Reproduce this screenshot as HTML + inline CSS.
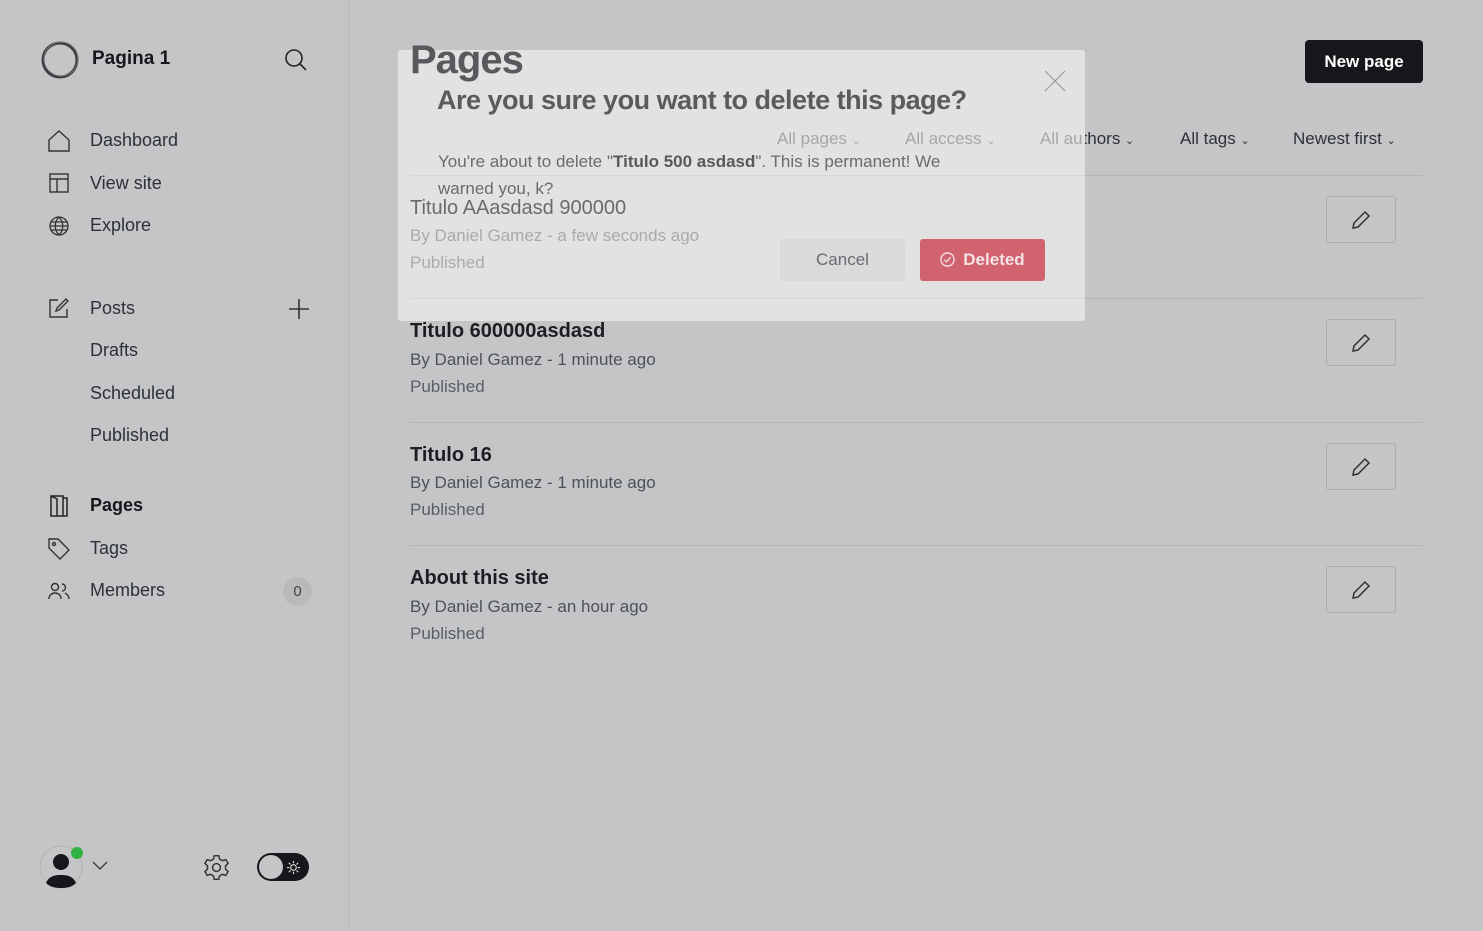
<!DOCTYPE html>
<html><head><meta charset="utf-8"><style>
*{box-sizing:border-box;margin:0;padding:0}
body{width:1483px;height:931px;overflow:hidden;background:#c4c5c7;font-family:"Liberation Sans",sans-serif;color:#2a2c30;position:relative}
.a{position:absolute;white-space:nowrap}
.side{position:absolute;left:0;top:0;width:349px;height:931px;border-right:1px solid #b8b9bb}
.nav{font-size:18px;color:#2d3035}
.ic{position:absolute}
.row{position:absolute;left:410px;width:1013px;height:1px;background:#b3b4b6}
.t{font-size:20px;font-weight:bold;color:#1c1e21}
.m{font-size:17px;color:#4d5157}
.p{font-size:17px;color:#5a5e63}
.ed{position:absolute;left:1326px;width:70px;height:47px;border:1px solid #acadaf;border-radius:3px}
.ed svg{position:absolute;left:24px;top:13px}
.modal{position:absolute;left:398px;top:50px;width:687px;height:271px;background:#e2e2e2;border-radius:3px;overflow:hidden}
.f{font-size:17px}
.f span{font-size:11px}
</style></head><body>
<div class="side">
 <svg class="ic" style="left:40px;top:40px" width="40" height="40" viewBox="0 0 40 40"><circle cx="20" cy="20" r="17" fill="none" stroke="#3a3c40" stroke-width="3"/><circle cx="21" cy="19" r="17" fill="none" stroke="#777" stroke-width="1"/></svg>
 <div class="a" style="left:92px;top:48px;font-size:19px;font-weight:bold;color:#15171a">Pagina 1</div>
 <svg class="ic" style="left:284px;top:48px" width="24" height="24" viewBox="0 0 24 24" fill="none" stroke="#222" stroke-width="1.6"><circle cx="10" cy="10" r="8"/><path d="M16 16l6 6"/></svg>
 <svg class="ic" style="left:48px;top:130px" width="22" height="22" viewBox="0 0 22 22" fill="none" stroke="#333" stroke-width="1.4"><path d="M1 21V10L11 1l10 9v11z"/></svg>
 <div class="a nav" style="left:90px;top:130px">Dashboard</div>
 <svg class="ic" style="left:49px;top:173px" width="20" height="20" viewBox="0 0 20 20" fill="none" stroke="#333" stroke-width="1.4"><rect x="1" y="1" width="18" height="18"/><path d="M1 6h18M8 6v13"/></svg>
 <div class="a nav" style="left:90px;top:173px">View site</div>
 <svg class="ic" style="left:49px;top:216px" width="20" height="20" viewBox="0 0 20 20" fill="none" stroke="#333" stroke-width="1.3"><circle cx="10" cy="10" r="9"/><path d="M1 10h18M10 1c-5 5-5 13 0 18M10 1c5 5 5 13 0 18M2 6h16M2 14h16"/></svg>
 <div class="a nav" style="left:90px;top:215px">Explore</div>
 <svg class="ic" style="left:48px;top:297px" width="22" height="22" viewBox="0 0 22 22" fill="none" stroke="#333" stroke-width="1.4"><path d="M10 3H2v17h17v-8M18 2l2 2-9 9-3 1 1-3z"/></svg>
 <div class="a nav" style="left:90px;top:298px">Posts</div>
 <svg class="ic" style="left:288px;top:298px" width="22" height="22" viewBox="0 0 22 22" stroke="#333" stroke-width="1.6"><path d="M11 1v20M1 11h20"/></svg>
 <div class="a nav" style="left:90px;top:340px">Drafts</div>
 <div class="a nav" style="left:90px;top:383px">Scheduled</div>
 <div class="a nav" style="left:90px;top:425px">Published</div>
 <svg class="ic" style="left:50px;top:495px" width="18" height="22" viewBox="0 0 18 22" fill="none" stroke="#222" stroke-width="1.5"><path d="M1 1h12v20H1zM13 3h4v18h-4"/><path d="M1 1l6 3v17"/></svg>
 <div class="a nav" style="left:90px;top:495px;font-weight:bold;color:#15171a">Pages</div>
 <svg class="ic" style="left:48px;top:538px" width="22" height="22" viewBox="0 0 22 22" fill="none" stroke="#333" stroke-width="1.4"><path d="M1 1h9l11 11-9 9L1 10z"/><circle cx="6" cy="6" r="1.5"/></svg>
 <div class="a nav" style="left:90px;top:538px">Tags</div>
 <svg class="ic" style="left:48px;top:582px" width="22" height="18" viewBox="0 0 22 18" fill="none" stroke="#333" stroke-width="1.4"><circle cx="7" cy="5" r="3.5"/><path d="M1 17c0-4 3-6 6-6s6 2 6 6M14 2a3.5 3.5 0 010 7M17 11c2 1 4 3 4 6"/></svg>
 <div class="a nav" style="left:90px;top:580px">Members</div>
 <div class="a" style="left:283px;top:577px;width:29px;height:29px;border-radius:50%;background:#b8b9bb;font-size:15px;text-align:center;line-height:29px;color:#444">0</div>
 <svg class="ic" style="left:40px;top:845px" width="44" height="44" viewBox="0 0 44 44"><circle cx="21" cy="22" r="21" fill="none" stroke="#b3b3b3"/><circle cx="21" cy="17" r="8" fill="#15171a"/><path d="M6 38c3-7 9-8 15-8s12 1 15 8c-4 4-9 5-15 5S10 42 6 38z" fill="#15171a"/><circle cx="37" cy="8" r="6" fill="#30b144"/></svg>
 <svg class="ic" style="left:92px;top:861px" width="16" height="10" viewBox="0 0 16 10" fill="none" stroke="#333" stroke-width="1.3"><path d="M1 1l7 7 7-7"/></svg>
 <svg class="ic" style="left:203px;top:854px" width="27" height="27" viewBox="0 0 24 24" fill="none" stroke="#333" stroke-width="1.3"><circle cx="12" cy="12" r="3.5"/><path d="M10 1.5h4l.7 3 2.6 1.5 3-1 2 3.4-2.3 2.1v3l2.3 2.1-2 3.4-3-1-2.6 1.5-.7 3h-4l-.7-3-2.6-1.5-3 1-2-3.4 2.3-2.1v-3L1.7 8.4l2-3.4 3 1L9.3 4.5z"/></svg>
 <div class="a" style="left:257px;top:853px;width:52px;height:28px;border-radius:14px;background:#15171a"></div>
 <div class="a" style="left:259px;top:855px;width:24px;height:24px;border-radius:50%;background:#c4c5c7"></div>
 <svg class="ic" style="left:286px;top:860px" width="15" height="15" viewBox="0 0 16 16" fill="none" stroke="#ddd" stroke-width="1.2"><circle cx="8" cy="8" r="3"/><path d="M8 1v2.5M8 12.5V15M1 8h2.5M12.5 8H15M3 3l1.8 1.8M11.2 11.2L13 13M3 13l1.8-1.8M11.2 4.8L13 3"/></svg>
</div>

<div class="a" style="left:1305px;top:40px;width:118px;height:43px;background:#15171a;border-radius:4px;color:#fff;font-size:17px;font-weight:bold;text-align:center;line-height:43px">New page</div>
<div class="a f" style="left:1040px;top:129px;color:#2d3035">All authors <span>⌄</span></div>
<div class="a f" style="left:1180px;top:129px;color:#2d3035">All tags <span>⌄</span></div>
<div class="a f" style="left:1293px;top:129px;color:#2d3035">Newest first <span>⌄</span></div>

<div class="row" style="top:175px"></div>
<div class="ed" style="top:196px"><svg width="20" height="20" viewBox="0 0 20 20" fill="none" stroke="#333" stroke-width="1.5"><path d="M2 18l1-5L14 2l4 4L7 17z"/></svg></div>
<div class="row" style="top:298px"></div>
<div class="a t" style="left:410px;top:320px">Titulo 600000asdasd</div>
<div class="a m" style="left:410px;top:350px">By Daniel Gamez - 1 minute ago</div>
<div class="a p" style="left:410px;top:377px">Published</div>
<div class="ed" style="top:319px"><svg width="20" height="20" viewBox="0 0 20 20" fill="none" stroke="#333" stroke-width="1.5"><path d="M2 18l1-5L14 2l4 4L7 17z"/></svg></div>
<div class="row" style="top:422px"></div>
<div class="a t" style="left:410px;top:444px">Titulo 16</div>
<div class="a m" style="left:410px;top:473px">By Daniel Gamez - 1 minute ago</div>
<div class="a p" style="left:410px;top:500px">Published</div>
<div class="ed" style="top:443px"><svg width="20" height="20" viewBox="0 0 20 20" fill="none" stroke="#333" stroke-width="1.5"><path d="M2 18l1-5L14 2l4 4L7 17z"/></svg></div>
<div class="row" style="top:545px"></div>
<div class="a t" style="left:410px;top:567px">About this site</div>
<div class="a m" style="left:410px;top:597px">By Daniel Gamez - an hour ago</div>
<div class="a p" style="left:410px;top:624px">Published</div>
<div class="ed" style="top:566px"><svg width="20" height="20" viewBox="0 0 20 20" fill="none" stroke="#333" stroke-width="1.5"><path d="M2 18l1-5L14 2l4 4L7 17z"/></svg></div>

<div class="modal">
 <svg class="ic" style="left:646px;top:20px" width="22" height="22" viewBox="0 0 22 22" stroke="#999" stroke-width="1.2"><path d="M1 1l20 20M21 1L1 21"/></svg>
 <div class="a" style="left:39px;top:35px;font-size:27px;font-weight:bold;color:#5a5b5e;letter-spacing:-0.5px">Are you sure you want to delete this page?</div>
 <div class="a f" style="left:379px;top:79px;color:#a6a7aa">All pages <span>⌄</span></div>
 <div class="a f" style="left:507px;top:79px;color:#a6a7aa">All access <span>⌄</span></div>
 <div class="a f" style="left:642px;top:79px;color:#a6a7aa">All au</div>
 <div class="a" style="left:40px;top:98px;font-size:17px;color:#6a6b6e;line-height:27px;white-space:normal;width:560px">You're about to delete "<b style="color:#58595c">Titulo 500 asdasd</b>". This is permanent! We warned you, k?</div>
 <div class="a" style="left:12px;top:125px;width:675px;height:1px;background:#d6d6d6"></div>
 <div class="a" style="left:12px;top:147px;font-size:20px;color:#6a6b6e">Titulo AAasdasd 900000</div>
 <div class="a" style="left:12px;top:176px;font-size:17px;color:#a9aaad">By Daniel Gamez - a few seconds ago</div>
 <div class="a" style="left:12px;top:203px;font-size:17px;color:#aaabae">Published</div>
 <div class="a" style="left:382px;top:189px;width:125px;height:42px;background:#d9dadc;border-radius:3px;text-align:center;line-height:42px;font-size:17px;color:#6a6b6e">Cancel</div>
 <div class="a" style="left:522px;top:189px;width:125px;height:42px;background:#d1636f;border-radius:3px;text-align:center;line-height:42px;font-size:17px;font-weight:bold;color:#f4e3e5"><svg width="15" height="15" viewBox="0 0 16 16" fill="none" stroke="#f4e3e5" stroke-width="1.4" style="vertical-align:-2px;margin-right:8px"><circle cx="8" cy="8" r="7"/><path d="M4.5 8.2l2.3 2.3 4.5-5"/></svg>Deleted</div>
 <div class="a" style="left:12px;top:248px;width:675px;height:1px;background:#d6d6d6"></div>
</div>
<div class="a" style="left:410px;top:38px;font-size:40px;font-weight:bold;color:#58595c;letter-spacing:-1px">Pages</div>
</body></html>
